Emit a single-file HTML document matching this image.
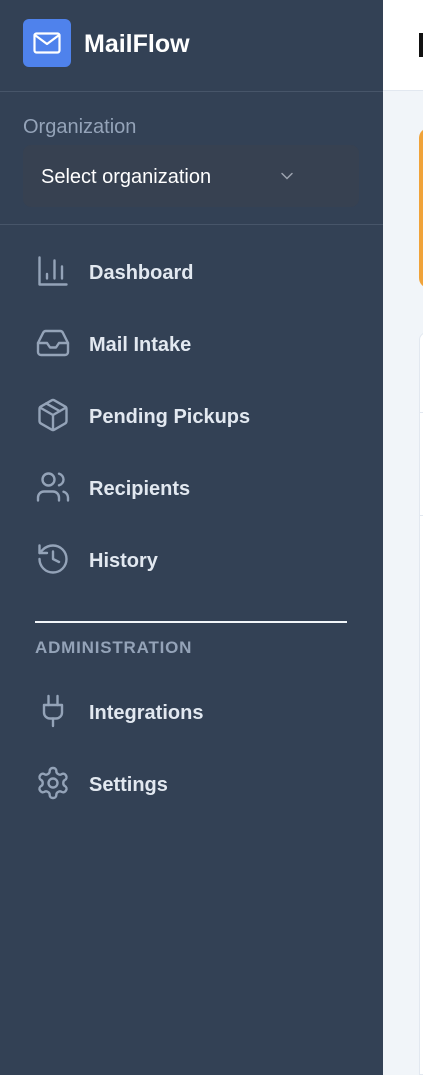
<!DOCTYPE html>
<html style="height:1075px;overflow:hidden"><head><style>
*{margin:0;padding:0;box-sizing:border-box}
body{width:423px;height:1075px;overflow:hidden;background:#f1f5f9;font-family:"Liberation Sans",sans-serif;position:relative}
.sb{position:absolute;left:0;top:0;width:383px;height:1075px;background:#334155}
.abs{position:absolute}
.nav{position:absolute;left:35px;display:flex;align-items:center;height:36px}
.nav svg{width:36px;height:36px;fill:none;stroke:#94a3b8;stroke-width:1.6;stroke-linecap:round;stroke-linejoin:round}
.nav span{position:absolute;left:54px;top:9px;white-space:nowrap;color:#e2e8f0;font-weight:bold;font-size:20px}
</style></head><body>
<div class="abs" style="left:383px;top:0;width:40px;height:91px;background:#fff;border-bottom:1px solid #e2e8f0"></div>
<div class="abs" style="left:419px;top:33px;width:4px;height:24px;background:#111"></div>
<div class="abs" style="left:419px;top:128px;width:20px;height:160px;background:#f0a33a;border-radius:10px"></div>
<div class="abs" style="left:419px;top:332px;width:20px;height:743px;background:#fff;border-radius:8px 8px 0 0;border:1px solid #e2e8f0"></div>
<div class="abs" style="left:419px;top:412px;width:4px;height:1px;background:#e2e8f0"></div>
<div class="abs" style="left:419px;top:515px;width:4px;height:1px;background:#e2e8f0"></div>
<div class="sb">
 <div class="abs" style="left:23px;top:19px;width:48px;height:48px;background:#4f82ec;border-radius:6px">
  <svg width="48" height="48" viewBox="0 0 48 48" fill="none" stroke="#fff" stroke-width="2.2" stroke-linecap="round" stroke-linejoin="round"><rect x="11.5" y="14.5" width="25" height="19" rx="2"/><path d="M12.5 16.5l11.5 8.5 11.5-8.5"/></svg>
 </div>
 <div class="abs" style="left:84px;top:30px;color:#fff;font-weight:bold;font-size:25px">MailFlow</div>
 <div class="abs" style="left:0;top:91px;width:383px;height:1px;background:#475569"></div>
 <div class="abs" style="left:23px;top:116px;color:#94a3b8;font-size:20px">Organization</div>
 <div class="abs" style="left:23px;top:145px;width:336px;height:62px;background:#374151;border-radius:8px"></div>
 <div class="abs" style="left:41px;top:166px;color:#fff;font-size:20px">Select organization</div>
 <svg class="abs" style="left:277px;top:166px" width="20" height="20" viewBox="0 0 24 24" fill="none" stroke="#9ca3af" stroke-width="1.8" stroke-linecap="round"><path d="M6 9l6 6 6-6"/></svg>
 <div class="abs" style="left:0;top:224px;width:383px;height:1px;background:#475569"></div>

 <div class="nav" style="top:253px"><svg viewBox="0 0 24 24"><path d="M3 3v18h18"/><path d="M18 17V9"/><path d="M13 17V5"/><path d="M8 17v-3"/></svg><span>Dashboard</span></div>
 <div class="nav" style="top:325px"><svg viewBox="0 0 24 24"><path d="M22 12h-6l-2 3h-4l-2-3H2"/><path d="M5.45 5.11L2 12v6a2 2 0 0 0 2 2h16a2 2 0 0 0 2-2v-6l-3.45-6.89A2 2 0 0 0 16.76 4H7.24a2 2 0 0 0-1.79 1.11z"/></svg><span>Mail Intake</span></div>
 <div class="nav" style="top:397px"><svg viewBox="0 0 24 24"><path d="M21 8a2 2 0 0 0-1-1.73l-7-4a2 2 0 0 0-2 0l-7 4A2 2 0 0 0 3 8v8a2 2 0 0 0 1 1.73l7 4a2 2 0 0 0 2 0l7-4A2 2 0 0 0 21 16Z"/><path d="m3.3 7 8.7 5 8.7-5"/><path d="M12 22V12"/><path d="m7.5 4.27 9 5.15"/></svg><span>Pending Pickups</span></div>
 <div class="nav" style="top:469px"><svg viewBox="0 0 24 24"><path d="M16 21v-2a4 4 0 0 0-4-4H6a4 4 0 0 0-4 4v2"/><circle cx="9" cy="7" r="4"/><path d="M22 21v-2a4 4 0 0 0-3-3.87"/><path d="M16 3.13a4 4 0 0 1 0 7.75"/></svg><span>Recipients</span></div>
 <div class="nav" style="top:541px"><svg viewBox="0 0 24 24"><path d="M3 12a9 9 0 1 0 9-9 9.75 9.75 0 0 0-6.74 2.74L3 8"/><path d="M3 3v5h5"/><path d="M12 7v5l4 2"/></svg><span>History</span></div>

 <div class="abs" style="left:35px;top:621px;width:312px;height:2px;background:#f1f5f9"></div>
 <div class="abs" style="left:35px;top:638px;color:#94a3b8;font-size:17px;font-weight:bold;letter-spacing:0.8px">ADMINISTRATION</div>

 <div class="nav" style="top:693px"><svg viewBox="0 0 24 24"><path d="M12 22v-5"/><path d="M9 8V2"/><path d="M15 8V2"/><path d="M18 8v5a4 4 0 0 1-4 4h-4a4 4 0 0 1-4-4V8Z"/></svg><span>Integrations</span></div>
 <div class="nav" style="top:765px"><svg viewBox="0 0 24 24"><path d="M12.22 2h-.44a2 2 0 0 0-2 2v.18a2 2 0 0 1-1 1.730l-.43.25a2 2 0 0 1-2 0l-.15-.08a2 2 0 0 0-2.73.73l-.22.38a2 2 0 0 0 .73 2.73l.15.1a2 2 0 0 1 1 1.72v.51a2 2 0 0 1-1 1.74l-.15.09a2 2 0 0 0-.73 2.73l.22.38a2 2 0 0 0 2.730.73l.15-.08a2 2 0 0 1 2 0l.43.25a2 2 0 0 1 1 1.73V20a2 2 0 0 0 2 2h.44a2 2 0 0 0 2-2v-.18a2 2 0 0 1 1-1.73l.43-.25a2 2 0 0 1 2 0l.15.08a2 2 0 0 0 2.73-.73l.22-.39a2 2 0 0 0-.73-2.73l-.15-.08a2 2 0 0 1-1-1.74v-.5a2 2 0 0 1 1-1.74l.15-.09a2 2 0 0 0 .73-2.73l-.22-.38a2 2 0 0 0-2.73-.73l-.15.08a2 2 0 0 1-2 0l-.43-.25a2 2 0 0 1-1-1.73V4a2 2 0 0 0-2-2z"/><circle cx="12" cy="12" r="3"/></svg><span>Settings</span></div>
</div>
</body></html>
